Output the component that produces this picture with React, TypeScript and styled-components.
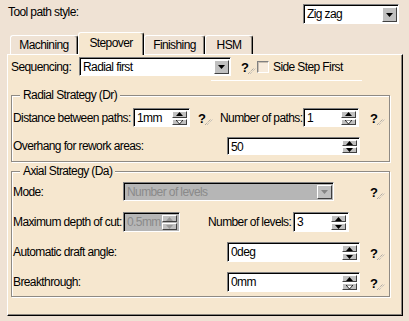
import React from 'react';
import styled, { createGlobalStyle } from 'styled-components';

const GlobalStyle = createGlobalStyle`
  body {
    margin: 0;
    background: #efe2d4;
    font-family: "Liberation Sans", Arial, sans-serif;
    font-size: 12px;
    letter-spacing: -0.6px;
    color: #000;
  }
`;

const Window = styled.div`
  width: 409px;
  height: 321px;
  background: #efe2d4;
  overflow: hidden;
`;

const TopRow = styled.div`
  display: flex;
  align-items: flex-start;
  height: 20px;
  padding: 4px 10px 0 8px;
`;

const Text = styled.span<{ $w?: number; $ml?: number }>`
  display: inline-block;
  flex: none;
  width: ${p => (p.$w ? `${p.$w}px` : 'auto')};
  margin-left: ${p => p.$ml ?? 0}px;
  line-height: 16px;
  white-space: nowrap;
`;

const TabStrip = styled.div`
  display: flex;
  align-items: flex-end;
  height: 22px;
  margin-top: 8px;
  padding-left: 10px;
`;

const Tab = styled.div<{ $w: number; $active?: boolean }>`
  position: relative;
  z-index: ${p => (p.$active ? 1 : 0)};
  box-sizing: border-box;
  width: ${p => p.$w}px;
  height: ${p => (p.$active ? 23 : 19)}px;
  margin-bottom: ${p => (p.$active ? -1 : 0)}px;
  padding-bottom: ${p => (p.$active ? 3 : 1)}px;
  display: flex;
  align-items: center;
  justify-content: center;
  background: ${p => (p.$active ? '#f6e7cf' : '#efe2d4')};
  border: 1px solid;
  border-color: #fff #000 transparent #fff;
  border-bottom: none;
  border-radius: 3px 3px 0 0;
  box-shadow: inset -1px 0 0 #8a857e;
`;

const Panel = styled.div`
  box-sizing: border-box;
  width: 396px;
  height: 262px;
  margin-left: 7px;
  background: #f6e7cf;
  border: 1px solid;
  border-color: #fff #000 #000 #fff;
  box-shadow: inset -1px -1px 0 #8a857e;
`;

const Row = styled.div<{ $mt: number; $h?: number; $pl?: number }>`
  display: flex;
  align-items: center;
  height: ${p => p.$h ?? 19}px;
  margin-top: ${p => p.$mt}px;
  padding-left: ${p => p.$pl ?? 0}px;
`;

const Sunken = styled.div<{ $w: number; $h?: number; $disabled?: boolean }>`
  box-sizing: border-box;
  flex: none;
  display: flex;
  align-items: stretch;
  width: ${p => p.$w}px;
  height: ${p => p.$h ?? 19}px;
  background: ${p => (p.$disabled ? '#b6b6b6' : '#fff')};
  color: ${p => (p.$disabled ? '#8a8a8a' : '#000')};
  border: 1px solid;
  border-color: #808080 #fff #fff #808080;
  box-shadow: inset 1px 1px 0 #000;
`;

const FieldText = styled.div`
  flex: 1;
  padding: 1px 0 0 3px;
  line-height: 16px;
  white-space: nowrap;
  overflow: hidden;
`;

const DropBtn = styled.div<{ $disabled?: boolean }>`
  box-sizing: border-box;
  width: 15px;
  margin: 2px 1px 1px 0;
  display: flex;
  align-items: center;
  justify-content: center;
  background: #c0c0c0;
  border: 1px solid;
  border-color: #fff #404040 #404040 #fff;
  svg polygon {
    fill: ${p => (p.$disabled ? '#858585' : '#000')};
  }
`;

const SpinCol = styled.div`
  display: flex;
  flex-direction: column;
  width: 15px;
  margin: 2px 2px 1px 0;
  gap: 1px;
`;

const SpinBtn = styled.div<{ $disabled?: boolean }>`
  box-sizing: border-box;
  flex: 1;
  display: flex;
  align-items: center;
  justify-content: center;
  background: #c0c0c0;
  border: 1px solid;
  border-color: #fff #404040 #404040 #fff;
  svg polygon {
    fill: ${p => (p.$disabled ? '#9a9a9a' : '#000')};
  }
`;

const HelpBox = styled.span<{ $ml: number }>`
  flex: none;
  display: inline-flex;
  align-items: flex-end;
  width: 16px;
  height: 15px;
  margin-left: ${p => p.$ml}px;
  font-weight: bold;
  font-size: 13px;
  line-height: 13px;
  letter-spacing: 0;
`;

const CheckBox = styled.span`
  box-sizing: border-box;
  flex: none;
  width: 12px;
  height: 12px;
  background: #f7ebdc;
  border: 1px solid;
  border-color: #808080 #fff #fff #808080;
  box-shadow: inset 1px 1px 0 #c9bfb2;
`;

const Separator = styled.div`
  width: 151px;
  height: 1px;
  margin: 4px 0 0 203px;
  background: #fff;
`;

const Group = styled.div<{ $mt: number; $pt: number; $pb: number }>`
  position: relative;
  box-sizing: border-box;
  width: 379px;
  margin: ${p => p.$mt}px 0 0 3px;
  padding: ${p => p.$pt}px 0 ${p => p.$pb}px 0;
  border: 1px solid #8e8a84;
  box-shadow: inset 1px 1px 0 #fff, 1px 1px 0 #fff;
`;

const Legend = styled.span`
  position: absolute;
  top: -8px;
  left: 8px;
  padding: 0 3px;
  line-height: 14px;
  background: #f6e7cf;
`;

const Arrow = ({ up, hollow }: { up?: boolean; hollow?: boolean }) => (
  <svg width="7" height="4" viewBox="0 0 7 4">
    <polygon
      points={up ? '0,4 3.5,0 7,4' : '0,0 7,0 3.5,4'}
      style={hollow ? { fill: '#fff', stroke: '#000', strokeWidth: 0.8 } : undefined}
    />
  </svg>
);

const Help = ({ ml }: { ml: number }) => (
  <HelpBox $ml={ml}>
    ?
    <svg width="8" height="7" viewBox="0 0 8 7" style={{ marginLeft: -1 }}>
      <line x1="0" y1="7" x2="6" y2="1" stroke="#8f8f8f" strokeDasharray="1 1" />
      <line x1="2" y1="7" x2="8" y2="1" stroke="#b0b0b0" strokeDasharray="1 1" />
    </svg>
  </HelpBox>
);

const Combo = ({ w, h, value, disabled }: { w: number; h?: number; value: string; disabled?: boolean }) => (
  <Sunken $w={w} $h={h} $disabled={disabled}>
    <FieldText>{value}</FieldText>
    <DropBtn $disabled={disabled}>
      <Arrow />
    </DropBtn>
  </Sunken>
);

const Spin = ({
  w,
  h,
  value,
  disabled,
  hollow,
}: {
  w: number;
  h?: number;
  value: string;
  disabled?: boolean;
  hollow?: boolean;
}) => (
  <Sunken $w={w} $h={h} $disabled={disabled}>
    <FieldText>{value}</FieldText>
    <SpinCol>
      <SpinBtn $disabled={disabled}>
        <Arrow up />
      </SpinBtn>
      <SpinBtn $disabled={disabled}>
        <Arrow hollow={hollow} />
      </SpinBtn>
    </SpinCol>
  </Sunken>
);

const App: React.FC = () => {
  return (
    <Window>
      <GlobalStyle />
      <TopRow>
        <Text>Tool path style:</Text>
        <div style={{ flex: 1 }} />
        <Combo w={96} h={20} value="Zig zag" />
      </TopRow>

      <TabStrip>
        <Tab $w={68}>Machining</Tab>
        <Tab $w={66} $active>Stepover</Tab>
        <Tab $w={61}>Finishing</Tab>
        <Tab $w={48}>HSM</Tab>
      </TabStrip>

      <Panel>
        <Row $mt={2} $pl={3}>
          <Text $w={68}>Sequencing:</Text>
          <Combo w={152} value="Radial first" />
          <Help ml={10} />
          <CheckBox />
          <Text $ml={4}>Side Step First</Text>
        </Row>
        <Separator />

        <Group $mt={14} $pt={12} $pb={6}>
          <Legend>Radial Strategy (Dr)</Legend>
          <Row $mt={0} $pl={1}>
            <Text $w={120}>Distance between paths:</Text>
            <Spin w={57} value="1mm" hollow />
            <Help ml={8} />
            <Text $w={83} $ml={6}>Number of paths:</Text>
            <Spin w={56} value="1" hollow />
            <Help ml={11} />
          </Row>
          <Row $mt={10} $h={18} $pl={1}>
            <Text $w={214}>Overhang for rework areas:</Text>
            <Spin w={133} h={18} value="50" />
          </Row>
        </Group>

        <Group $mt={9} $pt={10} $pb={4}>
          <Legend>Axial Strategy (Da)</Legend>
          <Row $mt={0} $pl={1}>
            <Text $w={110}>Mode:</Text>
            <Combo w={211} value="Number of levels" disabled />
            <Help ml={36} />
          </Row>
          <Row $mt={11} $h={20} $pl={1}>
            <Text $w={110}>Maximum depth of cut:</Text>
            <Spin w={57} h={20} value="0.5mm" disabled />
            <Text $w={85} $ml={28}>Number of levels:</Text>
            <Spin w={56} h={20} value="3" />
          </Row>
          <Row $mt={10} $h={20} $pl={1}>
            <Text $w={214}>Automatic draft angle:</Text>
            <Spin w={133} h={20} value="0deg" />
            <Help ml={10} />
          </Row>
          <Row $mt={10} $h={20} $pl={1}>
            <Text $w={214}>Breakthrough:</Text>
            <Spin w={133} h={20} value="0mm" hollow />
            <Help ml={10} />
          </Row>
        </Group>
      </Panel>
    </Window>
  );
};

export default App;
